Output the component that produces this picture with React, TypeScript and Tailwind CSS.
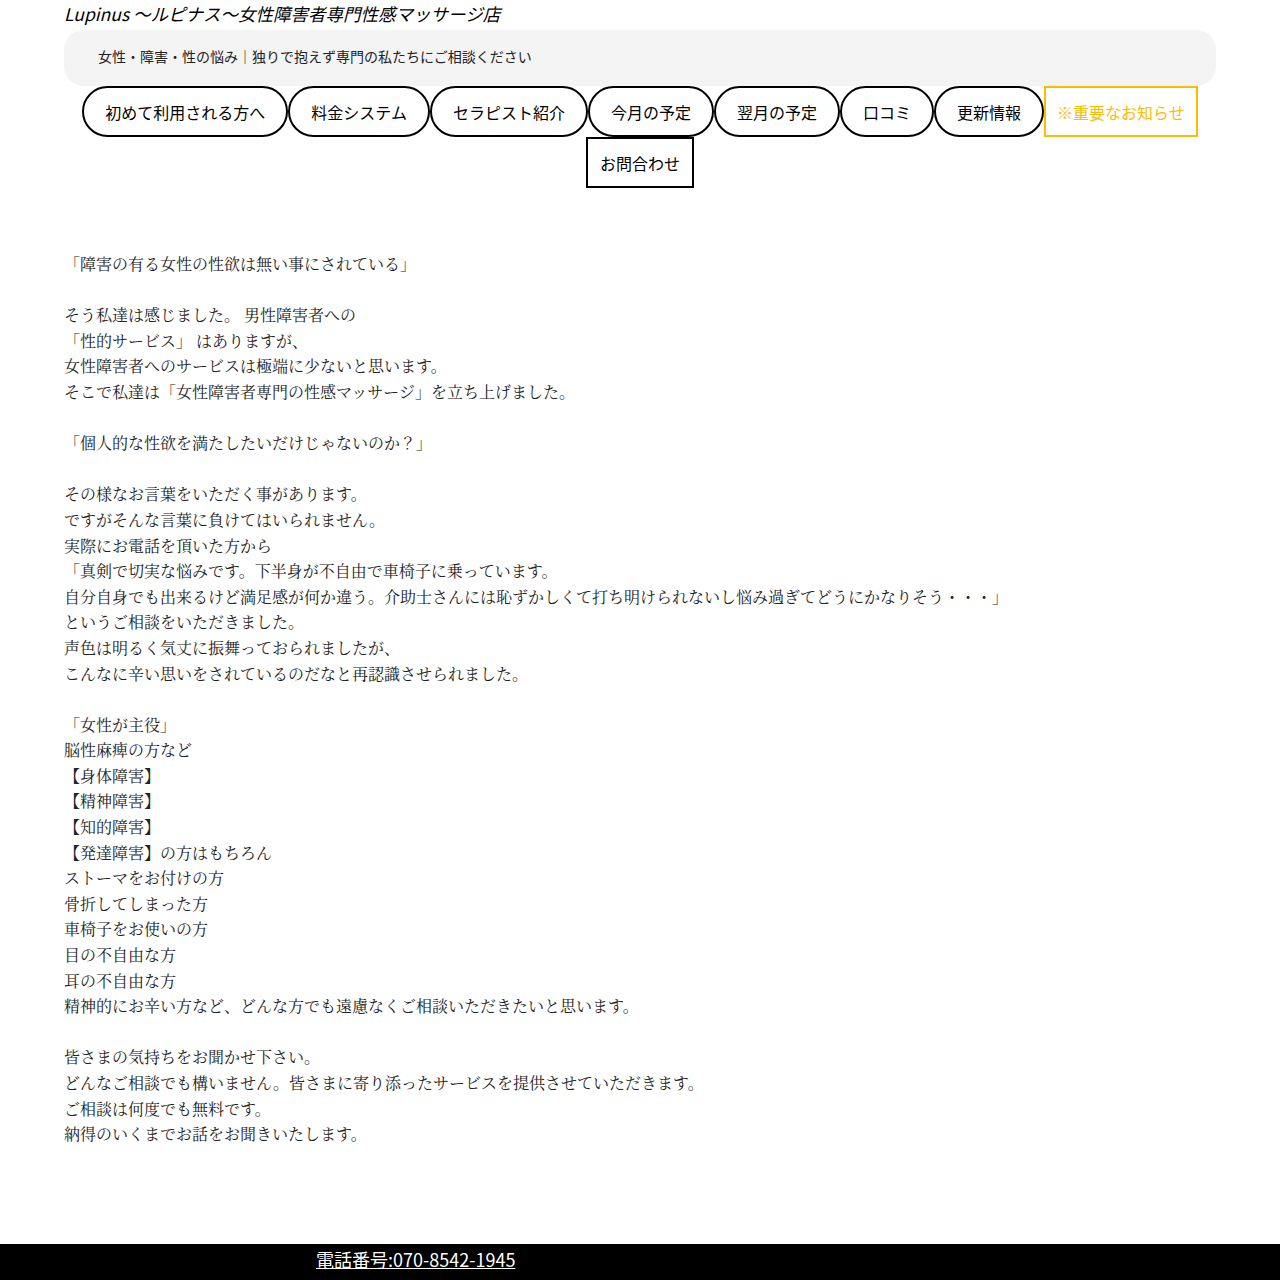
import React from 'react';

const nav = [
  '初めて利用される方へ',
  '料金システム',
  'セラピスト紹介',
  '今月の予定',
  '翌月の予定',
  '口コミ',
  '更新情報',
];

const body = [
  '「障害の有る女性の性欲は無い事にされている」',
  '',
  'そう私達は感じました。 男性障害者への',
  '「性的サービス」 はありますが、',
  '女性障害者へのサービスは極端に少ないと思います。',
  'そこで私達は「女性障害者専門の性感マッサージ」を立ち上げました。',
  '',
  '「個人的な性欲を満たしたいだけじゃないのか？」',
  '',
  'その様なお言葉をいただく事があります。',
  'ですがそんな言葉に負けてはいられません。',
  '実際にお電話を頂いた方から',
  '「真剣で切実な悩みです。下半身が不自由で車椅子に乗っています。',
  '自分自身でも出来るけど満足感が何か違う。介助士さんには恥ずかしくて打ち明けられないし悩み過ぎてどうにかなりそう・・・」',
  'というご相談をいただきました。',
  '声色は明るく気丈に振舞っておられましたが、',
  'こんなに辛い思いをされているのだなと再認識させられました。',
  '',
  '「女性が主役」',
  '脳性麻痺の方など',
  '【身体障害】',
  '【精神障害】',
  '【知的障害】',
  '【発達障害】の方はもちろん',
  'ストーマをお付けの方',
  '骨折してしまった方',
  '車椅子をお使いの方',
  '目の不自由な方',
  '耳の不自由な方',
  '精神的にお辛い方など、どんな方でも遠慮なくご相談いただきたいと思います。',
  '',
  '皆さまの気持ちをお聞かせ下さい。',
  'どんなご相談でも構いません。皆さまに寄り添ったサービスを提供させていただきます。',
  'ご相談は何度でも無料です。',
  '納得のいくまでお話をお聞きいたします。',
];

export default function App() {
  return (
    <div className="min-h-[1280px] bg-white text-black font-['Noto_Sans_CJK_JP','Noto_Sans',sans-serif]">
      <header className="mx-16">
        <h1 className="text-[17.5px] leading-[28px] mb-[2px] italic">Lupinus 〜ルピナス〜女性障害者専門性感マッサージ店</h1>
        <div className="h-[56px] rounded-[20px] bg-[#f4f4f4] pl-[34px] pt-[16px]">
          <p className="text-[14px] leading-[20px] text-[#222]">女性・障害・性の悩み｜独りで抱えず専門の私たちにご相談ください</p>
        </div>
        <nav className="flex flex-wrap justify-center px-[17px]">
          {nav.map((n) => (
            <a key={n} className="h-[51px] px-[21px] flex items-center border-2 border-black rounded-full text-[16px]">
              {n}
            </a>
          ))}
          <a className="h-[51px] px-[11px] flex items-center border-2 border-[#fbbc05] text-[#fbbc05] text-[16px]">
            ※重要なお知らせ
          </a>
          <a className="h-[51px] px-[12px] flex items-center border-2 border-black text-[16px]">お問合わせ</a>
        </nav>
      </header>

      <main className="mx-16 mt-[63px] mb-[97px] text-[16px] leading-[25.6px] text-[#222] font-['Noto_Serif_CJK_JP','Noto_Serif_JP','Liberation_Serif','Noto_Sans_CJK_JP',serif]">
        {body.map((l, i) => (
          <p key={i} className="whitespace-pre">{l || '\u00a0'}</p>
        ))}
      </main>

      <footer className="bg-black text-white pt-[2px] pb-10 pl-[316px]">
        <a className="underline text-[18px] leading-[26px]">電話番号:070-8542-1945</a>
        <p className="text-[16px] mt-1">営業時間 10:00〜22:00 / 定休日 不定休</p>
      </footer>
    </div>
  );
}
